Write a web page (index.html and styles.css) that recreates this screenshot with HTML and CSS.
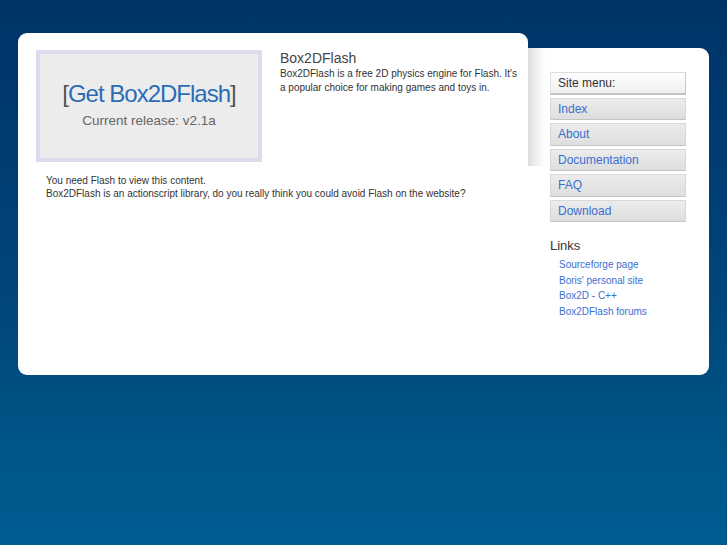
FILE: index.html
```html
<!DOCTYPE html>
<html>
<head>
<meta charset="utf-8">
<title>Box2DFlash</title>
<link rel="stylesheet" href="styles.css">
</head>
<body>
<div class="page">
  <div class="main">
    <div class="intro">
      <div class="flashbox">
        <div class="get"><span class="br">[</span><a href="#">Get Box2DFlash</a><span class="br">]</span></div>
        <div class="release">Current release: v2.1a</div>
      </div>
      <div class="about">
        <h1>Box2DFlash</h1>
        <p>Box2DFlash is a free 2D physics engine for Flash. It's a popular choice for making games and toys in.</p>
      </div>
    </div>
    <div class="noflash">
      <p>You need Flash to view this content.</p>
      <p>Box2DFlash is an actionscript library, do you really think you could avoid Flash on the website?</p>
    </div>
  </div>
  <div class="side">
    <ul class="menu">
      <li class="menu-title">Site menu:</li>
      <li><a href="#">Index</a></li>
      <li><a href="#">About</a></li>
      <li><a href="#">Documentation</a></li>
      <li><a href="#">FAQ</a></li>
      <li><a href="#">Download</a></li>
    </ul>
    <h2>Links</h2>
    <ul class="links">
      <li><a href="#">Sourceforge page</a></li>
      <li><a href="#">Boris' personal site</a></li>
      <li><a href="#">Box2D - C++</a></li>
      <li><a href="#">Box2DFlash forums</a></li>
    </ul>
  </div>
</div>
</body>
</html>
```
FILE: styles.css
```css
html, body {
  margin: 0;
  padding: 0;
}
body {
  min-height: 545px;
  background: linear-gradient(to bottom, #003468 0px, #003a70 120px, #00467c 300px, #004f82 390px, #00578b 470px, #005c91 545px);
  font-family: "Liberation Sans", Arial, sans-serif;
  color: #333;
}
a {
  text-decoration: none;
  color: #3a6fcf;
}
.page {
  display: flex;
  align-items: stretch;
  padding: 33px 0 0 18px;
  width: 691px;
}
.main {
  width: 510px;
  height: 342px;
  flex-shrink: 0;
  background: #fff;
  border-radius: 9px 9px 0 9px;
  box-sizing: border-box;
  padding: 17px 0 0 18px;
}
.intro {
  display: flex;
  gap: 18px;
}
.flashbox {
  width: 226px;
  height: 112px;
  flex-shrink: 0;
  box-sizing: border-box;
  border: 4px solid #dcdcee;
  background: #ececec;
  display: flex;
  flex-direction: column;
  align-items: center;
  justify-content: center;
  padding-bottom: 3px;
}
.get {
  font-size: 24px;
  letter-spacing: -1px;
  line-height: 28px;
}
.get a {
  color: #2b6cb6;
}
.get .br {
  color: #555;
}
.release {
  font-size: 13.5px;
  color: #666;
  line-height: 18px;
  margin-top: 4px;
}
.about {
  width: 242px;
  flex-shrink: 0;
}
.about h1 {
  margin: 0;
  font-size: 14px;
  font-weight: normal;
  color: #444;
  line-height: 17px;
}
.about p {
  margin: 0;
  font-size: 10px;
  line-height: 14px;
  color: #333;
}
.noflash {
  padding: 12px 0 0 10px;
}
.noflash p {
  margin: 0;
  font-size: 10px;
  line-height: 13px;
  color: #333;
}
.side {
  width: 181px;
  flex-shrink: 0;
  margin-top: 15px;
  background-color: #fff;
  background-image: linear-gradient(to right, rgba(0,0,0,0.13), rgba(0,0,0,0.03) 12px, rgba(0,0,0,0) 18px);
  background-size: 18px 118px;
  background-repeat: no-repeat;
  border-radius: 0 9px 9px 0;
  box-sizing: border-box;
  padding: 24px 0 0 22px;
}
.menu {
  list-style: none;
  margin: 0;
  padding: 0;
  width: 136px;
  display: flex;
  flex-direction: column;
  gap: 3px;
}
.menu li {
  height: 22.5px;
  box-sizing: border-box;
  border: 1px solid #d8d8d8;
  border-bottom-color: #c4c4c4;
  background: linear-gradient(to bottom, #ececec, #dedede);
  font-size: 12px;
  line-height: 20px;
  padding-left: 7px;
}
.menu li.menu-title {
  background: linear-gradient(to bottom, #ffffff, #f0f0f0);
  border-color: #dcdcdc;
  border-bottom: 2px solid #c4c4c4;
  border-right-color: #c8c8c8;
  color: #333;
}
.menu li a {
  color: #3a6fcf;
}
.side h2 {
  margin: 16px 0 0 0;
  font-size: 13px;
  font-weight: normal;
  color: #333;
  line-height: 16px;
}
.links {
  list-style: none;
  margin: 3px 0 0 0;
  padding: 0 0 0 9px;
}
.links li {
  font-size: 10px;
  line-height: 15.5px;
}
```
